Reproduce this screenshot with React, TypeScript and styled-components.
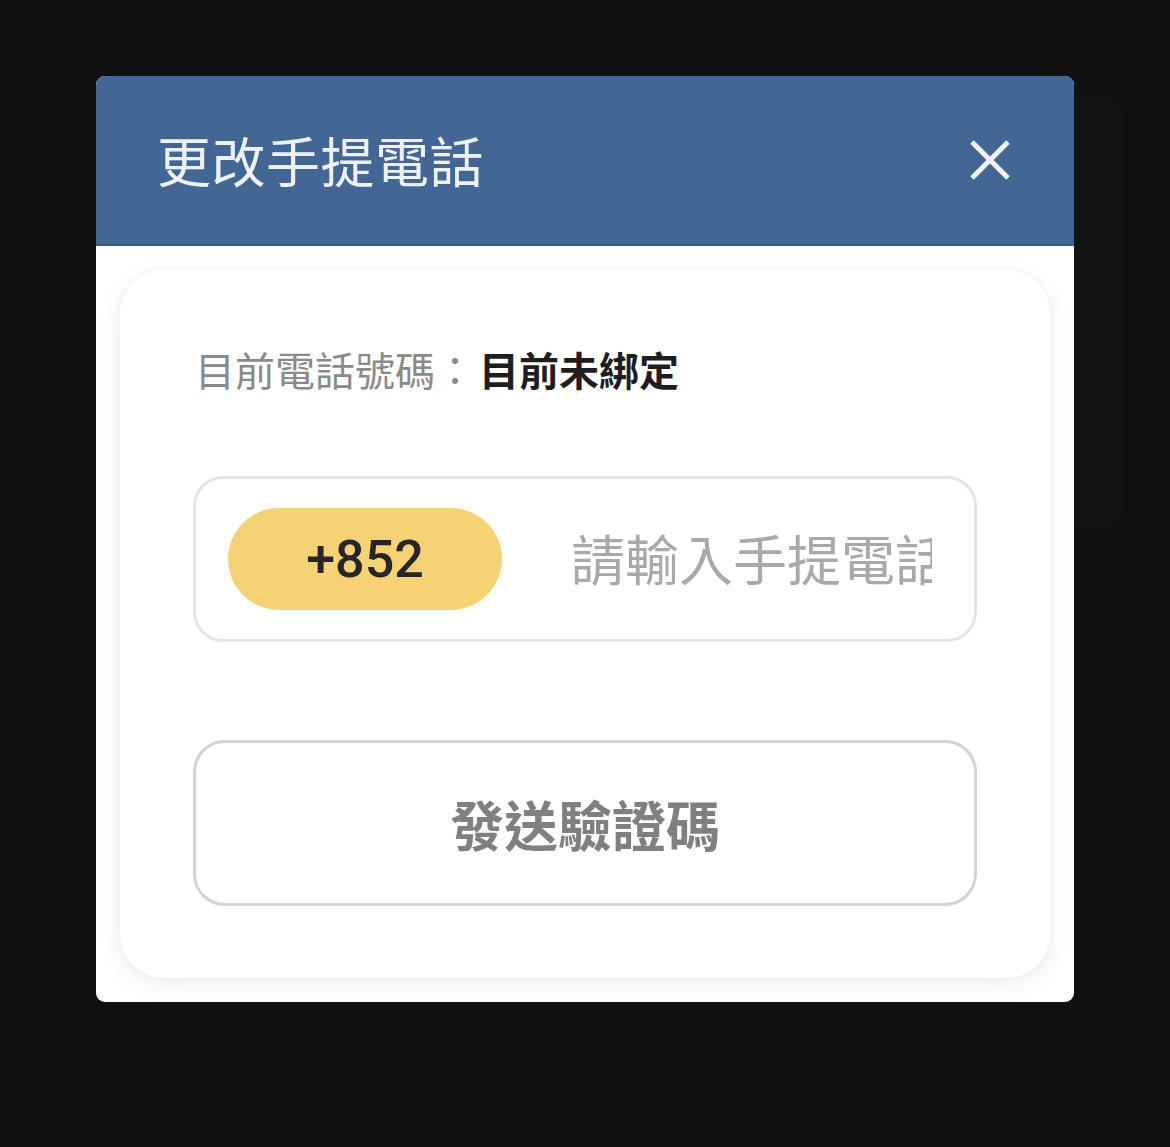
import React from "react";
import styled, { createGlobalStyle } from "styled-components";

const GlobalStyle = createGlobalStyle`
  html, body {
    margin: 0;
    padding: 0;
    background: #111111;
  }
  body {
    font-family: "Noto Sans CJK TC", "Noto Sans", sans-serif;
  }
  * { box-sizing: border-box; }
`;

const Page = styled.div`
  position: relative;
  min-height: 1147px;
  padding: 76px 0 0 96px;
  background: #111111;
`;

const Backdrop = styled.div`
  position: absolute;
  top: 96px;
  left: 300px;
  width: 822px;
  height: 434px;
  border-radius: 22px;
  background: #131313;
`;

const Modal = styled.div`
  position: relative;
  width: 978px;
  border-radius: 9px;
  overflow: hidden;
  background: #ffffff;
`;

const Header = styled.header`
  height: 170px;
  display: flex;
  align-items: center;
  justify-content: space-between;
  padding: 0 64px 0 61px;
  background: #426794;
  border-bottom: 2px solid #395a84;
`;

const Title = styled.h1`
  margin: 0;
  font-family: "Noto Sans CJK TC", sans-serif;
  font-size: 54px;
  font-weight: 400;
  line-height: 1;
  color: #eef2f8;
  letter-spacing: 0.5px;
`;

const CloseButton = styled.button`
  width: 40px;
  height: 40px;
  padding: 0;
  border: none;
  background: transparent;
  display: flex;
  align-items: center;
  justify-content: center;
  cursor: pointer;
`;

const Body = styled.div`
  padding: 24px;
`;

const Card = styled.div`
  display: flex;
  flex-direction: column;
  padding: 69px 73px 72px;
  border-radius: 44px;
  background: #ffffff;
  box-shadow: 0 6px 26px rgba(0, 0, 0, 0.07), 0 0 10px rgba(0, 0, 0, 0.03);
`;

const InfoRow = styled.div`
  font-size: 40px;
  line-height: 60px;
  padding-left: 2px;
  white-space: nowrap;
`;

const InfoLabel = styled.span`
  color: #8a8a8a;
  font-weight: 400;
`;

const InfoValue = styled.span`
  margin-left: 4px;
  color: #1e1e1e;
  font-weight: 700;
`;

const PhoneField = styled.div`
  margin-top: 77px;
  height: 166px;
  display: flex;
  align-items: center;
  gap: 69px;
  padding: 0 42px 0 32px;
  border: 3px solid #e5e5e5;
  border-radius: 30px;
`;

const CodePill = styled.div`
  flex: none;
  width: 274px;
  height: 102px;
  border-radius: 51px;
  background: #f5d374;
  display: flex;
  align-items: center;
  justify-content: center;
  font-family: Roboto, "Noto Sans", sans-serif;
  font-size: 52px;
  font-weight: 500;
  color: #262626;
`;

const PhoneInput = styled.input`
  flex: 1;
  min-width: 0;
  height: 80px;
  padding: 0 0 4px;
  border: none;
  outline: none;
  background: transparent;
  font-family: "Noto Sans CJK TC", sans-serif;
  font-size: 54px;
  color: #333;
  &::placeholder {
    color: #a9a9a9;
  }
`;

const SendButton = styled.button`
  margin-top: 98px;
  height: 166px;
  width: 100%;
  border: 3px solid #d3d3d3;
  border-radius: 32px;
  background: #ffffff;
  font-family: "Noto Sans CJK TC", sans-serif;
  font-size: 54px;
  font-weight: 700;
  color: #808080;
  cursor: pointer;
`;

export default function App() {
  return (
    <>
      <GlobalStyle />
      <Page>
        <Backdrop />
        <Modal>
          <Header>
            <Title>更改手提電話</Title>
            <CloseButton aria-label="close">
              <svg width="40" height="40" viewBox="0 0 40 40">
                <path
                  d="M2 2 L38 38 M38 2 L2 38"
                  stroke="#eef2f8"
                  strokeWidth="5"
                  strokeLinecap="butt"
                />
              </svg>
            </CloseButton>
          </Header>
          <Body>
            <Card>
              <InfoRow>
                <InfoLabel>目前電話號碼：</InfoLabel>
                <InfoValue>目前未綁定</InfoValue>
              </InfoRow>
              <PhoneField>
                <CodePill>+852</CodePill>
                <PhoneInput placeholder="請輸入手提電話" />
              </PhoneField>
              <SendButton>發送驗證碼</SendButton>
            </Card>
          </Body>
        </Modal>
      </Page>
    </>
  );
}
